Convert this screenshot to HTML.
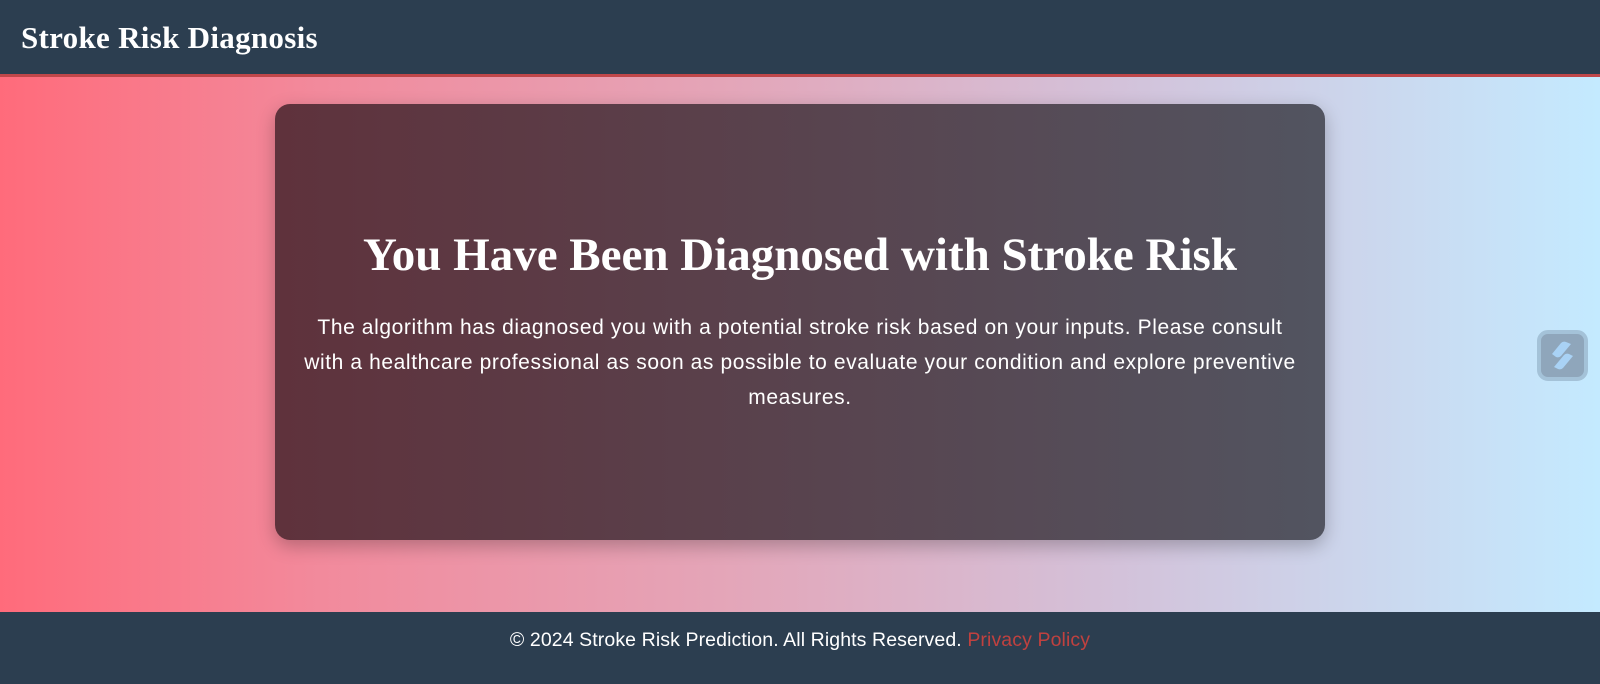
<!DOCTYPE html>
<html><head><meta charset="utf-8"><style>
*{margin:0;padding:0;box-sizing:border-box}
html,body{width:1600px;height:684px;overflow:hidden}
body{font-family:"Liberation Sans",sans-serif;background:linear-gradient(90deg,#ff6b7b 0%,#f28a9c 20%,#e4a5b8 45%,#d3c2da 70%,#c4eaff 100%);position:relative}
header{position:absolute;top:0;left:0;width:1600px;height:77px;background:#2c3e50;border-bottom:3px solid #c0474a}
header h1{font-family:"Liberation Serif",serif;font-weight:bold;color:#fff;font-size:31px;position:absolute;left:21px;top:20px;letter-spacing:0.3px}
.card{position:absolute;left:275px;top:104px;width:1050px;height:436px;border-radius:15px;background:linear-gradient(90deg,#5f323c,#525460);box-shadow:0 6px 18px rgba(0,0,0,0.25);text-align:center;color:#fff}
.card h2{font-family:"Liberation Serif",serif;font-weight:bold;font-size:47px;position:absolute;top:124px;left:0;right:0}
.card p{position:absolute;top:206px;left:24px;right:24px;font-size:21px;line-height:35px;letter-spacing:0.6px}
footer{position:absolute;left:0;top:612px;width:1600px;height:72px;background:#2c3e50;color:#fff;text-align:center;font-size:19.5px;padding-top:17px;letter-spacing:0.1px}
footer span{color:#c0413f}
.ic{position:absolute;left:1537px;top:330px;width:51px;height:51px;border-radius:11px;background:#8fa6bb;border:4px solid #a4c2d8}
</style></head><body>
<header><h1>Stroke Risk Diagnosis</h1></header>
<div class="card"><h2>You Have Been Diagnosed with Stroke Risk</h2>
<p>The algorithm has diagnosed you with a potential stroke risk based on your inputs. Please consult with a healthcare professional as soon as possible to evaluate your condition and explore preventive measures.</p></div>
<div class="ic"><svg width="43" height="43" viewBox="0 0 43 43"><path d="M11 20 L20 9 Q22 7 25 8 L30 10 L20 22 Q18 24 15 23 Z" fill="#a9d2f5"/><path d="M13 33 L23 21 Q25 19 28 20 L32 22 L22 34 Q20 36 17 35 Z" fill="#a9d2f5"/></svg></div>
<footer>© 2024 Stroke Risk Prediction. All Rights Reserved. <span>Privacy Policy</span></footer>
</body></html>
